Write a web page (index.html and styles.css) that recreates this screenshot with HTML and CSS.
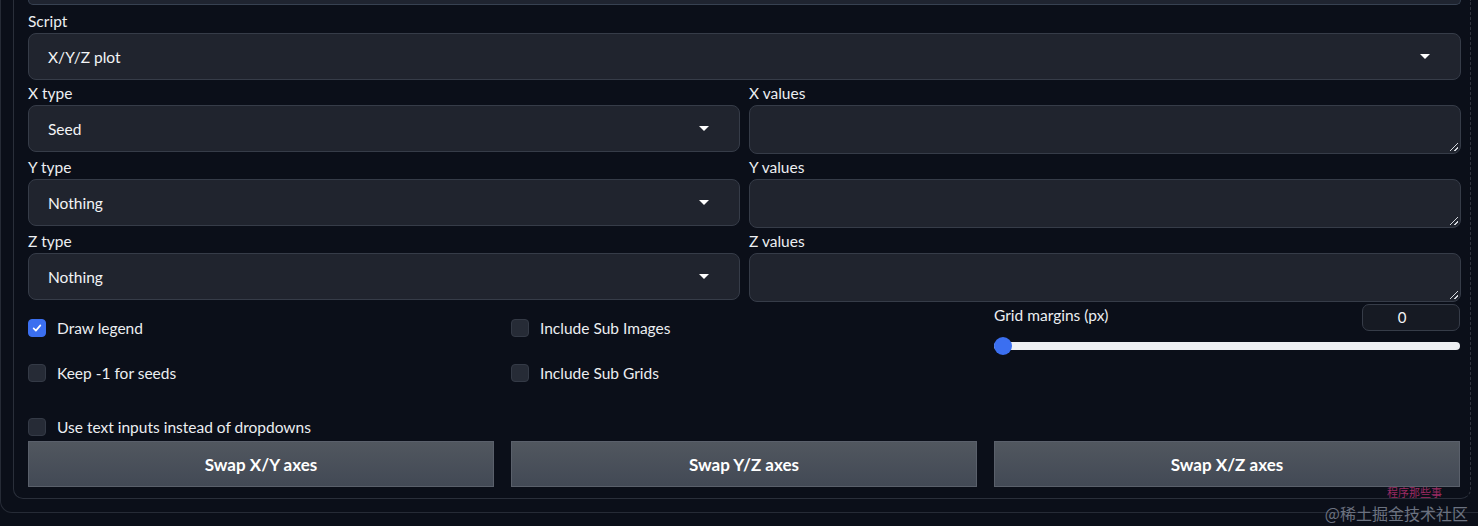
FILE: index.html
```html
<!DOCTYPE html>
<html lang="en">
<head>
<meta charset="utf-8">
<title>X/Y/Z plot</title>
<link rel="stylesheet" href="styles.css">
</head>
<body>
<div class="outer">
  <div class="panel">
    <div class="prev-box"></div>

    <div class="field">
      <div class="label">Script</div>
      <div class="dropdown"><span>X/Y/Z plot</span><span class="arrow"></span></div>
    </div>

    <div class="pairs">
      <div class="field">
        <div class="label">X type</div>
        <div class="dropdown"><span>Seed</span><span class="arrow"></span></div>
      </div>
      <div class="field">
        <div class="label">X values</div>
        <div class="textarea"><span class="grip"></span></div>
      </div>
      <div class="field">
        <div class="label">Y type</div>
        <div class="dropdown"><span>Nothing</span><span class="arrow"></span></div>
      </div>
      <div class="field">
        <div class="label">Y values</div>
        <div class="textarea"><span class="grip"></span></div>
      </div>
      <div class="field">
        <div class="label">Z type</div>
        <div class="dropdown"><span>Nothing</span><span class="arrow"></span></div>
      </div>
      <div class="field">
        <div class="label">Z values</div>
        <div class="textarea"><span class="grip"></span></div>
      </div>
    </div>

    <div class="options">
      <div class="opt-col">
        <label class="check"><span class="box checked"><svg viewBox="0 0 16 16" width="12" height="12"><path d="M3.5 8.5 L6.5 11.5 L12.5 4.5" fill="none" stroke="#fff" stroke-width="2.2" stroke-linecap="round" stroke-linejoin="round"/></svg></span>Draw legend</label>
        <label class="check"><span class="box"></span>Keep -1 for seeds</label>
      </div>
      <div class="opt-col">
        <label class="check"><span class="box"></span>Include Sub Images</label>
        <label class="check"><span class="box"></span>Include Sub Grids</label>
      </div>
      <div class="slider-col">
        <div class="slider-head">
          <span class="label">Grid margins (px)</span>
          <div class="number">0</div>
        </div>
        <div class="track"><span class="thumb"></span></div>
      </div>
    </div>

    <label class="check single"><span class="box"></span>Use text inputs instead of dropdowns</label>

    <div class="buttons">
      <div class="btn">Swap X/Y axes</div>
      <div class="btn">Swap Y/Z axes</div>
      <div class="btn">Swap X/Z axes</div>
    </div>
  </div>
</div>
<div class="watermark">
  <span class="wm-small">程序那些事</span>
  <span class="wm-big">@稀土掘金技术社区</span>
</div>
</body>
</html>
```

FILE: styles.css
```css
* { box-sizing: border-box; }

html, body {
  margin: 0;
  padding: 0;
  background: #0b0f19;
  color: #e5e7eb;
  font-family: "Lato", "Liberation Sans", sans-serif;
  font-size: 15px;
  overflow: hidden;
}

body {
  width: 1478px;
  height: 526px;
  position: relative;
}

.outer {
  margin-left: 0;
  width: 1492px;
  height: 513px;
  border: 1px solid #262b36;
  border-top: none;
  border-radius: 0 0 12px 12px;
  padding: 0 0 0 12px;
}

.panel {
  width: 1458px;
  height: 499px;
  border: 1px solid #2a2f3a;
  border-top: none;
  border-right: 1px dashed #30343e;
  border-radius: 0 0 10px 10px;
  padding: 0 9px 0 14px;
}

.prev-box {
  height: 5px;
  width: 1433px;
  border: 1px solid #374151;
  border-top: none;
  border-radius: 0 0 8px 8px;
  background: #1f2430;
  margin-bottom: 6px;
}

.field {
  display: flex;
  flex-direction: column;
  gap: 2px;
}

.label {
  line-height: 20px;
  height: 20px;
  color: #eceef1;
  font-size: 15.5px;
}

.dropdown {
  height: 47px;
  border: 1px solid #363c48;
  border-radius: 8px;
  background: #20242e;
  display: flex;
  align-items: center;
  justify-content: space-between;
  padding: 0 30px 0 19px;
  color: #f3f4f6;
  font-size: 15.5px;
}

.arrow {
  width: 0;
  height: 0;
  border-left: 5px solid transparent;
  border-right: 5px solid transparent;
  border-top: 5px solid #ffffff;
}

.pairs {
  margin-top: 3px;
  display: grid;
  grid-template-columns: 712px 712px;
  column-gap: 9px;
  row-gap: 3px;
  align-items: start;
  width: 1433px;
}

.textarea {
  height: 49px;
  border: 1px solid #363c48;
  border-radius: 8px;
  background: #20242e;
  position: relative;
}

.grip {
  position: absolute;
  right: 2px;
  bottom: 2px;
  width: 8px;
  height: 8px;
  background:
    linear-gradient(135deg, transparent 45%, #d1d5db 45%, #d1d5db 55%, transparent 55%),
    linear-gradient(135deg, transparent 75%, #d1d5db 75%, #d1d5db 85%, transparent 85%);
}

.options {
  margin-top: 2px;
  display: grid;
  grid-template-columns: 466px 466px 466px;
  column-gap: 17px;
  width: 1433px;
}

.opt-col {
  padding-top: 13px;
  display: flex;
  flex-direction: column;
  gap: 23px;
}

.check {
  display: flex;
  align-items: center;
  gap: 11px;
  height: 22px;
  font-size: 15.5px;
  color: #eceef1;
}

.box {
  width: 18px;
  height: 18px;
  border-radius: 4px;
  background: #262b36;
  border: 1px solid #343a46;
  display: flex;
  align-items: center;
  justify-content: center;
}

.box.checked {
  background: #3b6ff0;
  border-color: #3b6ff0;
}

.slider-col {
  display: flex;
  flex-direction: column;
}

.slider-head {
  display: flex;
  justify-content: space-between;
  align-items: flex-start;
}

.slider-head .label {
  margin-top: 1px;
}

.number {
  width: 98px;
  height: 27px;
  border: 1px solid #363c48;
  border-radius: 7px;
  background: #161a23;
  text-align: center;
  line-height: 25px;
  padding-right: 18px;
  font-size: 15px;
  color: #f3f4f6;
}

.track {
  margin-top: 11px;
  height: 8px;
  border-radius: 4px;
  background: #eef0f3;
  position: relative;
}

.thumb {
  position: absolute;
  left: 0;
  top: -5px;
  width: 18px;
  height: 18px;
  border-radius: 50%;
  background: #3b6ff0;
}

.check.single {
  margin-top: 32px;
}

.buttons {
  margin-top: 3px;
  display: grid;
  grid-template-columns: 466px 466px 466px;
  column-gap: 17px;
  width: 1433px;
}

.btn {
  height: 46px;
  background: linear-gradient(180deg, #51575f 0%, #424955 100%);
  border: 1px solid #5a606b;
  display: flex;
  align-items: center;
  justify-content: center;
  font-weight: 700;
  font-size: 17px;
  color: #ffffff;
}

.watermark {
  position: absolute;
  right: 10px;
  bottom: 1px;
  display: flex;
  flex-direction: column;
  align-items: flex-end;
  gap: 1px;
  font-family: "Noto Sans CJK SC", serif;
  pointer-events: none;
}

.wm-small {
  display: block;
  margin-right: 26px;
  font-size: 11px;
  color: #9b2b63;
}

.wm-big {
  display: block;
  font-size: 16px;
  color: #6b7280;
  white-space: nowrap;
}
```
